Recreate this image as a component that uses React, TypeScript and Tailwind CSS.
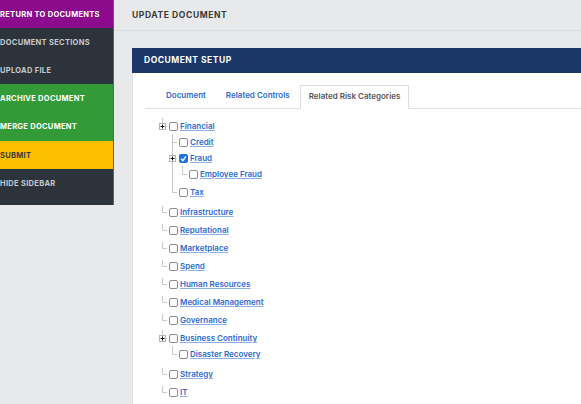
import React from "react"

type Row = {
  label: string
  level: number
  kind: "leaf" | "mid" | "last" | "expander" | "midExpander"
  h: number
  cont?: number[]
  checked?: boolean
}

const rows: Row[] = [
  { label: "Financial", level: 1, kind: "expander", h: 16 },
  { label: "Credit", level: 2, kind: "mid", h: 16 },
  { label: "Fraud", level: 2, kind: "midExpander", h: 16, checked: true },
  { label: "Employee Fraud", level: 3, kind: "last", h: 18, cont: [2] },
  { label: "Tax", level: 2, kind: "last", h: 20 },
  { label: "Infrastructure", level: 1, kind: "leaf", h: 18 },
  { label: "Reputational", level: 1, kind: "leaf", h: 18 },
  { label: "Marketplace", level: 1, kind: "leaf", h: 18 },
  { label: "Spend", level: 1, kind: "leaf", h: 18 },
  { label: "Human Resources", level: 1, kind: "leaf", h: 18 },
  { label: "Medical Management", level: 1, kind: "leaf", h: 18 },
  { label: "Governance", level: 1, kind: "leaf", h: 18 },
  { label: "Business Continuity", level: 1, kind: "expander", h: 16 },
  { label: "Disaster Recovery", level: 2, kind: "last", h: 20 },
  { label: "Strategy", level: 1, kind: "leaf", h: 18 },
  { label: "IT", level: 1, kind: "leaf", h: 18 },
]

const LINE = "#c9c9c9"

// one 10px column of tree lines
const Connector = ({ kind, h }: { kind: string; h: number }) => (
  <svg width="10" height={h} className="shrink-0 block">
    {kind === "cont" && <line x1="5.5" y1="0" x2="5.5" y2={h} stroke={LINE} />}
    {kind === "leaf" && (
      <path d="M5.5 2 V8.5 H10" fill="none" stroke={LINE} />
    )}
    {kind === "last" && <path d="M5.5 0 V8.5 H10" fill="none" stroke={LINE} />}
    {kind === "mid" && (
      <path d={`M5.5 0 V${h} M5.5 8.5 H10`} fill="none" stroke={LINE} />
    )}
    {(kind === "expander" || kind === "midExpander") && (
      <>
        {kind === "midExpander" ? (
          <line x1="5.5" y1="0" x2="5.5" y2={h} stroke={LINE} />
        ) : (
          <line x1="5.5" y1="0" x2="5.5" y2="5" stroke={LINE} />
        )}
        <line x1="8" y1="8.5" x2="10" y2="8.5" stroke={LINE} />
        <rect x="2.5" y="5.5" width="6" height="6" fill="#fff" stroke="#b5b5b5" />
        <path d="M3.5 8.5 H7.5 M5.5 6.5 V10.5" stroke="#111" />
      </>
    )}
  </svg>
)

const Checkbox = ({ checked }: { checked?: boolean }) =>
  checked ? (
    <span className="w-[9px] h-[9px] mt-[4px] rounded-[2px] bg-[#1a73e8] flex items-center justify-center shrink-0">
      <svg width="7" height="7" viewBox="0 0 10 10">
        <path d="M1.5 5.5 L4 8 L8.5 2" stroke="#fff" strokeWidth="2" fill="none" />
      </svg>
    </span>
  ) : (
    <span className="w-[9px] h-[9px] mt-[4px] rounded-[2px] border border-[#8d8d8d] bg-white shrink-0" />
  )

const sideItems = [
  { t: "RETURN TO DOCUMENTS", c: "bg-[#8c0a8c] text-white", h: "h-[28px]" },
  { t: "DOCUMENT SECTIONS", c: "bg-[#2d333a] text-[#c5cad0]", h: "h-[28px]" },
  { t: "UPLOAD FILE", c: "bg-[#2d333a] text-[#c5cad0]", h: "h-[28px]" },
  { t: "ARCHIVE DOCUMENT", c: "bg-[#339a38] text-white", h: "h-[28px]" },
  { t: "MERGE DOCUMENT", c: "bg-[#339a38] text-white", h: "h-[29px]" },
  { t: "SUBMIT", c: "bg-[#fdbf00] text-[#3a3a3a]", h: "h-[28px]" },
  { t: "HIDE SIDEBAR", c: "bg-[#2d333a] text-[#c5cad0]", h: "h-[36px]" },
]

export default function App() {
  return (
    <div className="flex h-screen overflow-hidden bg-[#e8e9eb] font-['Inter','Liberation_Sans',sans-serif]">
      {/* sidebar */}
      <div className="w-[114px] shrink-0 self-start flex flex-col border-r border-[#5b6168]">
        {sideItems.map((s) => (
          <div key={s.t} className={`${s.c} ${s.h} pt-[10px] text-[7.5px] font-bold tracking-[0.04em] leading-[10px] whitespace-nowrap`}>
            {s.t}
          </div>
        ))}
      </div>

      {/* main */}
      <div className="flex-1 flex flex-col min-w-0">
        <div className="h-[31px] border-b border-[#dcdde0] pl-[18px] flex items-center">
          <span className="text-[8.5px] font-bold tracking-[0.07em] text-[#3a3a3a]">UPDATE DOCUMENT</span>
        </div>

        <div className="ml-[18px] mt-[17px] flex-1 flex flex-col">
          <div className="h-[25px] bg-[#1a3768] pl-[12px] flex items-center">
            <span className="text-[8.5px] font-bold tracking-[0.06em] text-white">DOCUMENT SETUP</span>
          </div>
          <div className="flex-1 bg-white border-l border-[#dfe0e2] pt-[12px] pl-[12px]">
            {/* tabs */}
            <div className="flex items-end h-[24px] border-b border-[#e2e2e2] text-[8px] font-semibold">
              <div className="w-[21px]" />
              <div className="pb-[7px] text-[#2b6bd1]">Document</div>
              <div className="w-[20px]" />
              <div className="pb-[7px] text-[#2b6bd1]">Related Controls</div>
              <div className="w-[10px]" />
              <div className="h-[24px] -mb-px px-[8px] pb-[7px] flex items-end bg-white border border-b-0 border-[#dcdcdc] text-[#555]">
                Related Risk Categories
              </div>
            </div>

            {/* tree */}
            <div className="pt-[9px] pl-[12px] flex flex-col">
              {rows.map((r) => {
                const cols: React.ReactNode[] = []
                for (let l = 1; l < r.level; l++) {
                  cols.push(<Connector key={l} kind={r.cont?.includes(l) ? "cont" : "none"} h={r.h} />)
                }
                return (
                  <div key={r.label} className="flex items-start" style={{ height: r.h }}>
                    {cols}
                    <Connector kind={r.kind} h={r.h} />
                    <div className="w-[2px]" />
                    <Checkbox checked={r.checked} />
                    <span className="ml-[2px] text-[8px] leading-[17px] font-semibold text-[#2b6bd1] underline decoration-[#8cb0e6] underline-offset-[1px] whitespace-nowrap">
                      {r.label}
                    </span>
                  </div>
                )
              })}
            </div>
          </div>
        </div>
      </div>
    </div>
  )
}
